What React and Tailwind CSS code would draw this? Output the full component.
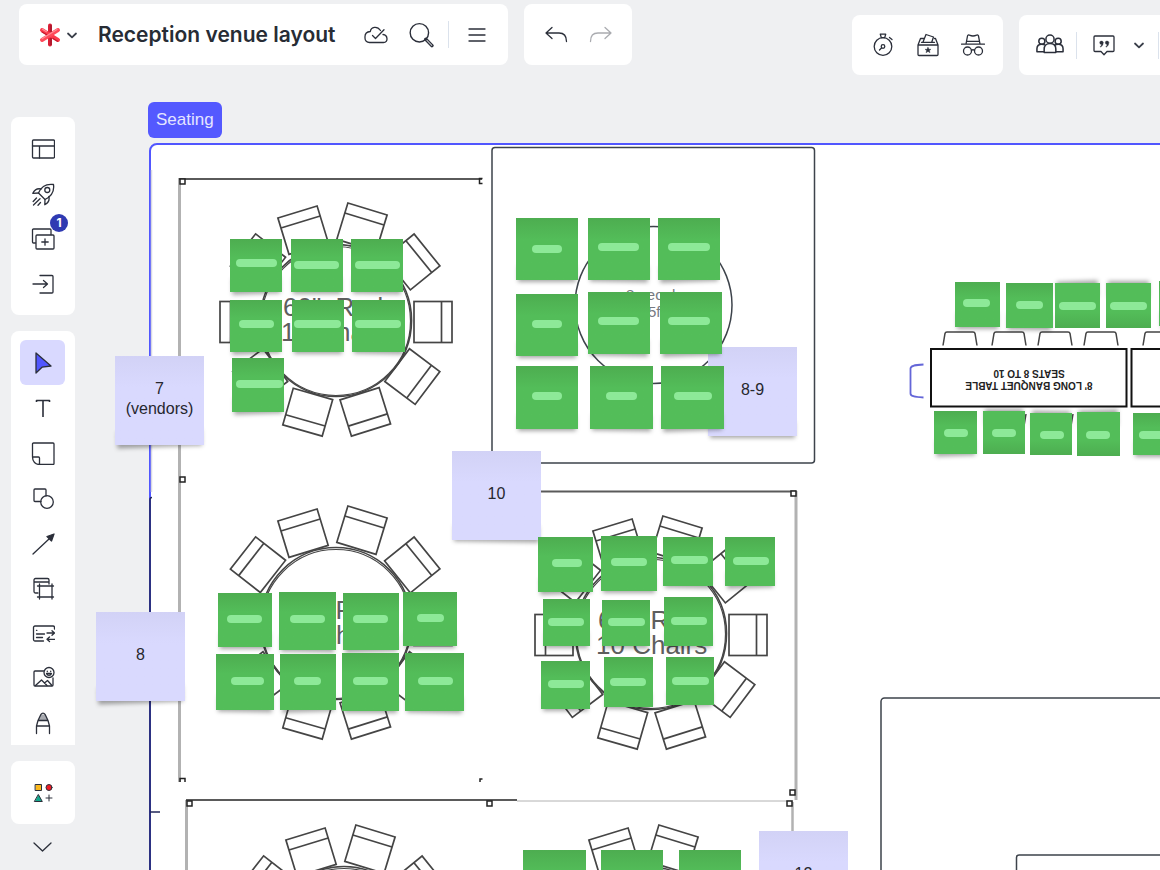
import React from "react";

const INK = "#2b2f3a";

/* ---------- icons ---------- */

function Icon({ children, size = 24, className = "" }) {
  return (
    <svg width={size} height={size} viewBox="0 0 24 24" fill="none" stroke={INK} strokeWidth="1.3" strokeLinecap="round" strokeLinejoin="round" className={className} aria-hidden="true">
      {children}
    </svg>
  );
}

const Arrowhead = () => <path d="M23 3l-2.5 7-4.5-4.5z" fill={INK} />;

const icons = {
  layout: (
    <Icon><rect x="1.5" y="3" width="22" height="18" rx="1" /><path d="M1.5 9h22M8.5 9v12" /></Icon>
  ),
  rocket: (
    <Icon>
      <path d="M22.5 2.5C15 1.500 10 5 7.500 11l6.500 6.500C20 14.500 23.500 9.500 22.500 2.500z" />
      <circle cx="16.300" cy="8" r="2.500" />
      <path d="M10 7C6 6 3.500 8 1.800 11.300L7.500 11M17.800 14.500c1 3.500-.8 6.500-4 8.300L14 17.500M5.500 16l-3.300 3.500M9 16.800l-6.500 6.200M9.500 20.500l-2.500 2.700" />
    </Icon>
  ),
  addFrame: (
    <Icon>
      <path d="M4.500 16H2.500a1 1 0 0 1-1-1V3a1 1 0 0 1 1-1H19a1 1 0 0 1 1 1v4.500" />
      <rect x="5" y="8" width="18" height="14" rx="1" />
      <path d="M14 11.800v6.400M10.800 15h6.400" />
    </Icon>
  ),
  importIn: (
    <Icon><path d="M9 3.500h12a1 1 0 0 1 1 1V20a1 1 0 0 1-1 1H9" /><path d="M2 12h14M12.500 8.500L16.500 12l-4 3.500" /></Icon>
  ),
  cursor: (
    <Icon><path d="M5 2l15 13-9 1.200L5 22z" fill="#5156ff" /></Icon>
  ),
  text: (
    <Icon><path d="M5.500 6V4.500h13V6M12 4.500V21" strokeWidth="1.600" strokeLinecap="butt" /></Icon>
  ),
  note: (
    <Icon><path d="M1.500 16V3a1 1 0 0 1 1-1H22a1 1 0 0 1 1 1v19.500a1 1 0 0 1-1 1H8.500c-4 0-7-3-7-7.500h6a1 1 0 0 1 1 1v6.500" /></Icon>
  ),
  shapes: (
    <Icon><path d="M10 15.500H4a1 1 0 0 1-1-1V4a1 1 0 0 1 1-1h10a1 1 0 0 1 1 1v6" /><circle cx="16" cy="16" r="6.300" /></Icon>
  ),
  line: (
    <Icon><path d="M2 23L18 8" /><Arrowhead /></Icon>
  ),
  crop: (
    <Icon>
      <path d="M7 17H4.500A1.500 1.500 0 0 1 3 15.500V4a1.500 1.500 0 0 1 1.500-1.500h12A1.500 1.500 0 0 1 18 4v4M3 6h15" />
      <path d="M6.500 10h16M6.500 21h16M8.500 8v15M21 8v15" />
    </Icon>
  ),
  data: (
    <Icon>
      <path d="M12.500 20H4a1.500 1.500 0 0 1-1.500-1.500v-12A1.500 1.500 0 0 1 4 5h18a1.500 1.500 0 0 1 1.500 1.500V8" />
      <path d="M5.500 9.300h.4M5.500 13h8M5.500 16.500h6M16 12h7.500M21 9.700l2.500 2.300-2.500 2.300M23.500 18.300H16M18.500 16l-2.500 2.300 2.500 2.300" />
    </Icon>
  ),
  image: (
    <Icon>
      <path d="M12.500 5H4a1 1 0 0 0-1 1v13a1 1 0 0 0 1 1h17a1 1 0 0 0 1-1v-7" />
      <path d="M4.500 19.500l6-5.500 5.500 5.500M13.500 17l3-2.500 4.500 5" />
      <circle cx="18" cy="6.500" r="5" />
      <path d="M15.500 7.500c.8 2.500 4.200 2.500 5 0zM16.300 5.200v.3M19.700 5.200v.3" />
    </Icon>
  ),
  marker: (
    <Icon>
      <path d="M10 3.500h4l3 6H7z" fill="#a8aab0" stroke="none" />
      <path d="M5.500 22.500V15L7 9.500 10 3.300c1-1.600 3-1.600 4 0l3 6.200 1.500 5.500v7.500M5.500 15h13M7 9.500h10" />
    </Icon>
  ),
  library: (
    <Icon>
      <g strokeWidth="1">
        <rect x="4.500" y="3.500" width="6" height="6" fill="#fbb81b" />
        <circle cx="18" cy="6.500" r="3" fill="#ee1c25" />
        <path d="M7.500 13.800l3.800 6.700H3.700z" fill="#12a88c" />
        <path d="M18 14v6M15 17h6" />
      </g>
    </Icon>
  ),
  cloud: (
    <Icon>
      <path d="M16.500 7.500C13 2.500 7 4 6.300 8.500 2.500 8.800.8 11.500 1 14.500.8 18 3 19.500 5.500 19.500h14c5 0 4.500-7.500-.5-8" />
      <path d="M8.500 12.500l3 3L20 6.800" />
    </Icon>
  ),
  search: (
    <Icon size={26}>
      <circle cx="10.500" cy="10" r="8.500" />
      <path d="M16.500 16l5.600 5.800" strokeWidth="3.200" />
      <path d="M17.500 17l4.400 4.600" strokeWidth="1" stroke="#b9bbc1" />
    </Icon>
  ),
  menu: (
    <Icon><path d="M4 6h16M4 12h16M4 18h16" /></Icon>
  ),
  undo: (
    <Icon><path d="M2 10h13c5 0 7.500 3 7.500 8.500M8 4.500L2 10l6 5.500" /></Icon>
  ),
  redo: (
    <Icon className="opacity-40"><path d="M22 10H9c-5 0-7.500 3-7.500 8.500M16 4.500l6 5.500-6 5.500" /></Icon>
  ),
  timer: (
    <Icon>
      <circle cx="12" cy="13.500" r="8.800" />
      <path d="M9.300 1.200h5.400l-1 3.400h-3.400zM18.500 4.500l2.500 2M8.500 17l2-2" />
      <circle cx="12" cy="13.500" r="1.800" />
    </Icon>
  ),
  vote: (
    <Icon>
      <path d="M2 12v9.500a1 1 0 0 0 1 1h18a1 1 0 0 0 1-1V12zM2 12l2.500-6.500H8M22 12l-2.500-6.500h-1" />
      <path d="M7 9l3-7.500L17.500 4l-1.800 5.300M5.500 9.300h13" />
      <path d="M12 14.300l1 2h2l-1.600 1.300.6 2.100-2-1.300-2 1.300.6-2.100L9 16.300h2z" fill={INK} strokeWidth=".4" />
    </Icon>
  ),
  incognito: (
    <Icon>
      <path d="M.5 11.200h23M5 11l1.500-8c.2-1 1-1.300 2-.8 2.200 1 4.800 1 7 0 1-.5 1.800-.2 2 .8l1.500 8M5.500 8.300h13" />
      <circle cx="6.500" cy="18" r="4" /><circle cx="17.500" cy="18" r="4" />
      <path d="M10.500 17.300c1-.7 2-.7 3 0" />
    </Icon>
  ),
  people: (
    <Icon size={28}>
      <circle cx="12" cy="7" r="3.500" /><circle cx="5" cy="8.800" r="2.600" /><circle cx="19" cy="8.800" r="2.600" />
      <path d="M7 18.500v-3c0-3 2-4.800 5-4.800s5 1.800 5 4.800v3zM6.800 17.800H.8v-2.500c0-2.500 1.700-4 4.200-4 1 0 1.800.2 2.500.6M17.200 17.800h6v-2.500c0-2.500-1.700-4-4.200-4-1 0-1.800.2-2.500.6" />
    </Icon>
  ),
  comment: (
    <Icon>
      <path d="M3 3h18a1 1 0 0 1 1 1v13.500a1 1 0 0 1-1 1h-6l-3 3.200-3-3.200H3a1 1 0 0 1-1-1V4a1 1 0 0 1 1-1z" />
      <g fill={INK} strokeWidth=".3">
        <path d="M11.200 9.300c.2 2.500-.8 4-2.700 4.900l-.3-.7c1-.5 1.300-1.200 1.300-2A1.800 1.800 0 1 1 11.200 9.300zM16.800 9.300c.2 2.500-.8 4-2.700 4.900l-.3-.7c1-.5 1.300-1.200 1.300-2A1.800 1.800 0 1 1 16.800 9.300z" />
      </g>
    </Icon>
  ),
};

function SmallChevron() {
  return (
    <svg width="12" height="12" viewBox="0 0 12 12" fill="none" stroke="#3a3f4a" strokeWidth="1.800" strokeLinecap="round" strokeLinejoin="round" aria-hidden="true">
      <path d="M2 4.500l4 3.800 4-3.800" />
    </svg>
  );
}

function Logo() {
  return (
    <svg width="22" height="24" viewBox="0 0 22 24" fill="none" strokeLinecap="round" aria-hidden="true">
      <path d="M11 2.500v19" stroke="#d81f36" strokeWidth="4" />
      <path d="M3 7l16 10" stroke="#fb3b4c" strokeWidth="4" />
      <path d="M19 7L3 17" stroke="#ff4a5a" strokeWidth="4" />
      <path d="M12 2.500v6M12 15.500v6" stroke="#a3182c" strokeWidth="1.400" />
      <path d="M3 9l5 3M14 15.500l4.500 2.800" stroke="#c4182e" strokeWidth="1.200" />
      <path d="M3 15.800l15-9.300M3.500 6.300l4 2.400" stroke="#ff8c96" strokeWidth="1.200" />
    </svg>
  );
}

/* ---------- seating plan drawing ---------- */

/* [x, y, angle]: middle of a chair's outer edge, measured from the table's centre */
const CHAIRS = [
  [116, 0, 0], [91.5, 66, 37], [35, 108, 72.5], [-33.5, 108.5, 106], [-91, 66, 143],
  [-116, 0, 180], [-93, -72, 218], [-38.5, -110, 253], [31.5, -113, 287], [91, -72, 321],
];

function RoundTable({ cx, cy, label }) {
  return (
    <g transform={`translate(${cx} ${cy})`} fill="none" stroke="#454545" strokeWidth="1.700">
      {CHAIRS.map(([x, y, a]) => (
        <g key={a} transform={`translate(${x} ${y}) rotate(${a})`}>
          <rect x="-38" y="-20.500" width="38" height="41" />
          <path d="M-10.500 -20.500v41" />
        </g>
      ))}
      <ellipse cy="-1.500" rx="75.500" ry="76" />
      <ellipse cy="-1" rx="74.500" ry="74.500" strokeWidth="1.200" />
      {label && (
        <text fill="#5e5e5e" stroke="none" fontFamily="'Liberation Sans', Arial, sans-serif" fontSize="26" className="whitespace-pre">
          <tspan x="-53" y="-6">{'60"  Rnd'}</tspan>
          <tspan x="-55" y="19">10 Chairs</tspan>
        </text>
      )}
    </g>
  );
}

const HANDLES = [
  [180, 179], [180, 477], [791, 491], [790, 790], [187, 801], [487, 801], [787, 801],
];

const TOP_CHAIRS = [943, 992, 1038, 1084, 1143];

function PlanDrawing() {
  return (
    <svg className="absolute left-0 top-0 overflow-visible" width="1160" height="870" viewBox="0 0 1160 870" fill="none" aria-label="Seating plan">
      <path d="M151.500 170v322" stroke="#d9d9e2" strokeWidth="1.500" />
      <g stroke="#b2b2b2" strokeWidth="3">
        <path d="M179.500 178v604M796 491v309M186.500 800v90" />
        <path d="M792.500 802v60" strokeWidth="2.500" />
        <path d="M517 801h276" strokeWidth="1" />
      </g>
      <path d="M179 179h303M541 491.500h255M186 800h331" stroke="#5a5a5a" strokeWidth="2" />
      <g stroke="#222" strokeWidth="1.500">
        {HANDLES.map(([x, y]) => <rect key={`${x}-${y}`} x={x} y={y} width="5" height="5" fill="#fff" />)}
        <path d="M482.500 178.500h-3v5h3M180 782v-3.500h5v3.500M480 782v-3h2.500" />
      </g>

      <RoundTable cx={336} cy={322} label />
      <RoundTable cx={336} cy={625} label />
      <RoundTable cx={651} cy={635} label />
      <RoundTable cx={344} cy={944} />
      <RoundTable cx={647} cy={944} />

      <g stroke="#3d434b" strokeWidth="1.500">
        <rect x="492" y="147.500" width="322.500" height="315.500" rx="3" fill="#fff" />
        <circle cx="653.500" cy="305" r="78.500" />
        <path d="M1170 698H884.500a3.500 3.500 0 0 0-3.500 3.500V880M1170 855h-151a2.500 2.500 0 0 0-2.500 2.500V880" />
      </g>
      <text fill="#777b82" fontFamily="'Liberation Sans', Arial, sans-serif" fontSize="15">
        <tspan x="626" y="300">8 people</tspan>
        <tspan x="648" y="317">5ft</tspan>
      </text>

      <g stroke="#111" strokeWidth="2">
        <rect x="931" y="349" width="195.500" height="57.500" fill="#fff" />
        <rect x="1131.500" y="349" width="195" height="57.500" fill="#fff" />
      </g>
      <g stroke="#444" strokeWidth="1.500">
        {TOP_CHAIRS.map((x) => (
          <path key={x} d={`M${x} 345.500l2-12q.3-1.500 2-1.500h26q1.700 0 2 1.500l2 12`} />
        ))}
        <path d="M1026 414l-2 12M1073 414l-2 12" />
      </g>
      <path d="M923.500 364.500c-10 .5-13 1.500-13 4v25c0 2.500 3 3.500 13 4" stroke="#6466d8" strokeWidth="1.800" />
      <g fill="#222" fontFamily="'Liberation Sans', Arial, sans-serif" fontSize="10" fontWeight="700" textAnchor="middle">
        <text transform="translate(1029 382) rotate(180)">8' LONG BANQUET TABLE</text>
        <text transform="translate(1029 370) rotate(180)">SEATS 8 TO 10</text>
      </g>
    </svg>
  );
}

/* ---------- sticky notes: [x, y, w, h, pillX, pillY, pillW, flipped] ---------- */

const GREEN_NOTES = [
  [230, 239, 52, 53, 236, 259, 41], [291, 239, 52, 53, 294, 261, 45], [351, 239, 52, 53, 355, 261, 45],
  [230, 300, 52, 52, 239, 320, 35], [292, 300, 52, 52, 294, 320, 47], [352, 300, 53, 52, 355, 320, 46],
  [232, 358, 52, 54, 236, 380, 47],
  [516, 218, 62, 62, 532, 245, 30], [588, 218, 62, 62, 598, 243, 41], [658, 218, 62, 62, 668, 243, 42],
  [516, 294, 62, 62, 532, 320, 30], [588, 292, 62, 62, 598, 317, 41], [660, 292, 62, 62, 668, 317, 42],
  [516, 366, 62, 63, 532, 392, 30], [590, 366, 63, 63, 606, 392, 31], [661, 366, 63, 63, 674, 392, 38],
  [218, 593, 54, 54, 227, 615, 35], [279, 592, 57, 58, 290, 615, 35], [343, 593, 56, 57, 353, 615, 35], [403, 592, 54, 54, 417, 614, 27],
  [216, 654, 58, 56, 231, 677, 33], [280, 654, 56, 56, 294, 677, 27], [342, 653, 57, 58, 353, 677, 35], [405, 653, 59, 58, 418, 677, 35],
  [538, 537, 55, 55, 552, 559, 30], [601, 536, 56, 55, 611, 558, 36], [663, 537, 50, 49, 671, 556, 37], [725, 537, 50, 49, 733, 557, 36],
  [543, 599, 47, 47, 548, 618, 36], [602, 600, 48, 46, 608, 618, 37], [664, 597, 49, 49, 671, 617, 36],
  [541, 661, 49, 48, 548, 680, 36], [604, 657, 49, 50, 610, 678, 36], [666, 657, 48, 48, 672, 677, 37],
  [523, 850, 63, 63, 539, 876, 31], [601, 850, 62, 63, 617, 876, 31], [679, 850, 62, 63, 695, 876, 31],
  [955, 282, 45, 45, 963, 299, 27], [1006, 283, 47, 45, 1016, 301, 27], [1055, 283, 45, 45, 1059, 302, 37, true], [1106, 283, 45, 45, 1110, 302, 37, true], [1159, 281, 45, 45, 1166, 299, 30],
  [934, 411, 43, 43, 944, 429, 24], [983, 411, 42, 43, 992, 429, 24, true], [1030, 413, 42, 42, 1040, 431, 24, true], [1077, 412, 43, 44, 1086, 431, 24, true], [1133, 413, 43, 42, 1139, 431, 30],
];

const LABEL_NOTES = [
  { x: 115, y: 356, lines: ["7", "(vendors)"] },
  { x: 708, y: 347, lines: ["8-9"] },
  { x: 452, y: 451, lines: ["10"] },
  { x: 96, y: 612, lines: ["8"] },
  { x: 759, y: 831, lines: ["12"] },
];

const TILTS = ["rotate-[-2deg]", "rotate-0", "rotate-[1deg]"];

function NoteShadow({ index, flipped }) {
  const edge = flipped ? "-top-0.5" : "-bottom-0.5";
  return <div className={`absolute inset-x-0.5 h-4 bg-black/35 blur-[2px] ${edge} ${TILTS[index % 3]}`} />;
}

function GreenNote({ note, index }) {
  const [x, y, w, h, px, py, pw, flipped] = note;
  const face = flipped
    ? "from-[#53bd59] from-65% to-[#4dad50]"
    : "from-[#4dad50] to-[#53bd59] to-35%";
  return (
    <div className="absolute" style={{ left: x, top: y, width: w, height: h }}>
      <NoteShadow index={index} flipped={flipped} />
      <div className={`absolute inset-0 bg-linear-to-b ${face}`} />
      <div className="absolute h-2 rounded-full bg-[#8de998]" style={{ left: px - x, top: py - y, width: pw }} />
    </div>
  );
}

function LabelNote({ note, index }) {
  return (
    <div className="absolute size-[89px]" style={{ left: note.x, top: note.y }}>
      <NoteShadow index={index} />
      <div className="absolute inset-0 flex flex-col items-center justify-center bg-linear-to-b from-[#d2d2f6] to-[#d9d9fe] to-35% pb-1 text-center text-base leading-5 text-[#26272e]">
        {note.lines.map((line) => <span key={line}>{line}</span>)}
      </div>
    </div>
  );
}

function Canvas() {
  return (
    <main className="absolute inset-0 overflow-hidden" aria-label="Board">
      <div className="absolute left-[148px] top-[102px] flex h-9 items-center rounded-md bg-[#5459ff] px-2 text-[17px] text-[#e4e5ff]">Seating</div>
      <div className="absolute -bottom-3 -right-3 left-[149px] top-[143px] rounded-tl-lg border-2 border-[#5156ff] bg-white" />
      <svg className="absolute left-0 top-0" width="170" height="870" viewBox="0 0 170 870" fill="none" aria-hidden="true">
        <path d="M152 497.500q-2 0-2 2V870M150 812h10" stroke="#20265a" strokeWidth="1.500" />
      </svg>
      <PlanDrawing />
      {LABEL_NOTES.map((n, i) => <LabelNote key={i} note={n} index={i} />)}
      {GREEN_NOTES.map((n, i) => <GreenNote key={i} note={n} index={i} />)}
    </main>
  );
}

/* ---------- toolbars ---------- */

function ToolButton({ icon, label, active, badge }) {
  return (
    <button type="button" aria-label={label} className={`relative flex size-[45px] shrink-0 items-center justify-center rounded-md ${active ? "bg-[#d9d9ff]" : ""}`}>
      {icons[icon]}
      {badge && (
        <span className="absolute -right-[3px] -top-0.5 flex size-[18px] items-center justify-center rounded-full bg-[#2f3ab2] font-[Inter] text-xs font-bold text-white">{badge}</span>
      )}
    </button>
  );
}

const Divider = () => <span className="h-[27px] w-px shrink-0 bg-[#dbe2ec]" />;

const PANEL = "flex rounded-lg bg-white";

function Header() {
  return (
    <header className="relative flex items-start justify-between pl-[19px] pt-1">
      <div className="flex gap-4">
        <div className={`${PANEL} h-[61px] items-center pl-5 pr-[9px]`}>
          <button type="button" aria-label="Main menu" className="flex items-center gap-[5px]">
            <Logo />
            <SmallChevron />
          </button>
          <h1 className="ml-5 mr-[18px] whitespace-nowrap font-[Inter] text-[21px] font-semibold leading-7 text-[#272c35]">Reception venue layout</h1>
          <ToolButton icon="cloud" label="Saved" />
          <ToolButton icon="search" label="Search" />
          <span className="mx-[5px] flex"><Divider /></span>
          <ToolButton icon="menu" label="Menu" />
        </div>
        <div className={`${PANEL} h-[61px] items-center px-[9px]`}>
          <ToolButton icon="undo" label="Undo" />
          <ToolButton icon="redo" label="Redo" />
        </div>
      </div>
      <div className="mt-[11px] flex gap-4">
        <div className={`${PANEL} h-[60px] items-center px-2`}>
          <ToolButton icon="timer" label="Timer" />
          <ToolButton icon="vote" label="Voting" />
          <ToolButton icon="incognito" label="Private mode" />
        </div>
        <div className="flex h-[60px] items-center rounded-l-lg bg-white pl-2">
          <ToolButton icon="people" label="Collaborators" />
          <span className="mx-1 flex"><Divider /></span>
          <ToolButton icon="comment" label="Comments" />
          <button type="button" aria-label="Comment options" className="mr-1.5 flex h-11 w-[26px] items-center justify-center"><SmallChevron /></button>
          <Divider />
          <span className="w-px" />
        </div>
      </div>
    </header>
  );
}

function Sidebar() {
  return (
    <aside className="relative ml-[11px] mt-[42px] flex w-16 flex-col">
      <div className="flex flex-col gap-4">
        <nav className={`${PANEL} flex-col py-[9px] pl-[9px]`} aria-label="Board">
          <ToolButton icon="layout" label="Templates" />
          <ToolButton icon="rocket" label="Quick start" />
          <ToolButton icon="addFrame" label="Add frame" badge="1" />
          <ToolButton icon="importIn" label="Import" />
        </nav>
        <nav className="flex flex-col rounded-t-lg bg-white pl-[9px] pt-[9px]" aria-label="Tools">
          <ToolButton icon="cursor" label="Select" active />
          <ToolButton icon="text" label="Text" />
          <ToolButton icon="note" label="Sticky note" />
          <ToolButton icon="shapes" label="Shapes" />
          <ToolButton icon="line" label="Line" />
          <ToolButton icon="crop" label="Frame" />
          <ToolButton icon="data" label="Data cards" />
          <ToolButton icon="image" label="Images" />
          <ToolButton icon="marker" label="Marker" />
        </nav>
        <div className={`${PANEL} flex-col py-[9px] pl-[9px]`}>
          <ToolButton icon="library" label="Shape library" />
        </div>
      </div>
      <button type="button" aria-label="More tools" className="flex h-[45px] items-center justify-center">
        <Icon><path d="M3 8l8.500 8L20 8" /></Icon>
      </button>
    </aside>
  );
}

export default function App() {
  return (
    <div className="relative h-screen overflow-hidden bg-[#eff0f2] font-['Liberation_Sans',Arial,sans-serif]">
      <Canvas />
      <Header />
      <Sidebar />
    </div>
  );
}
